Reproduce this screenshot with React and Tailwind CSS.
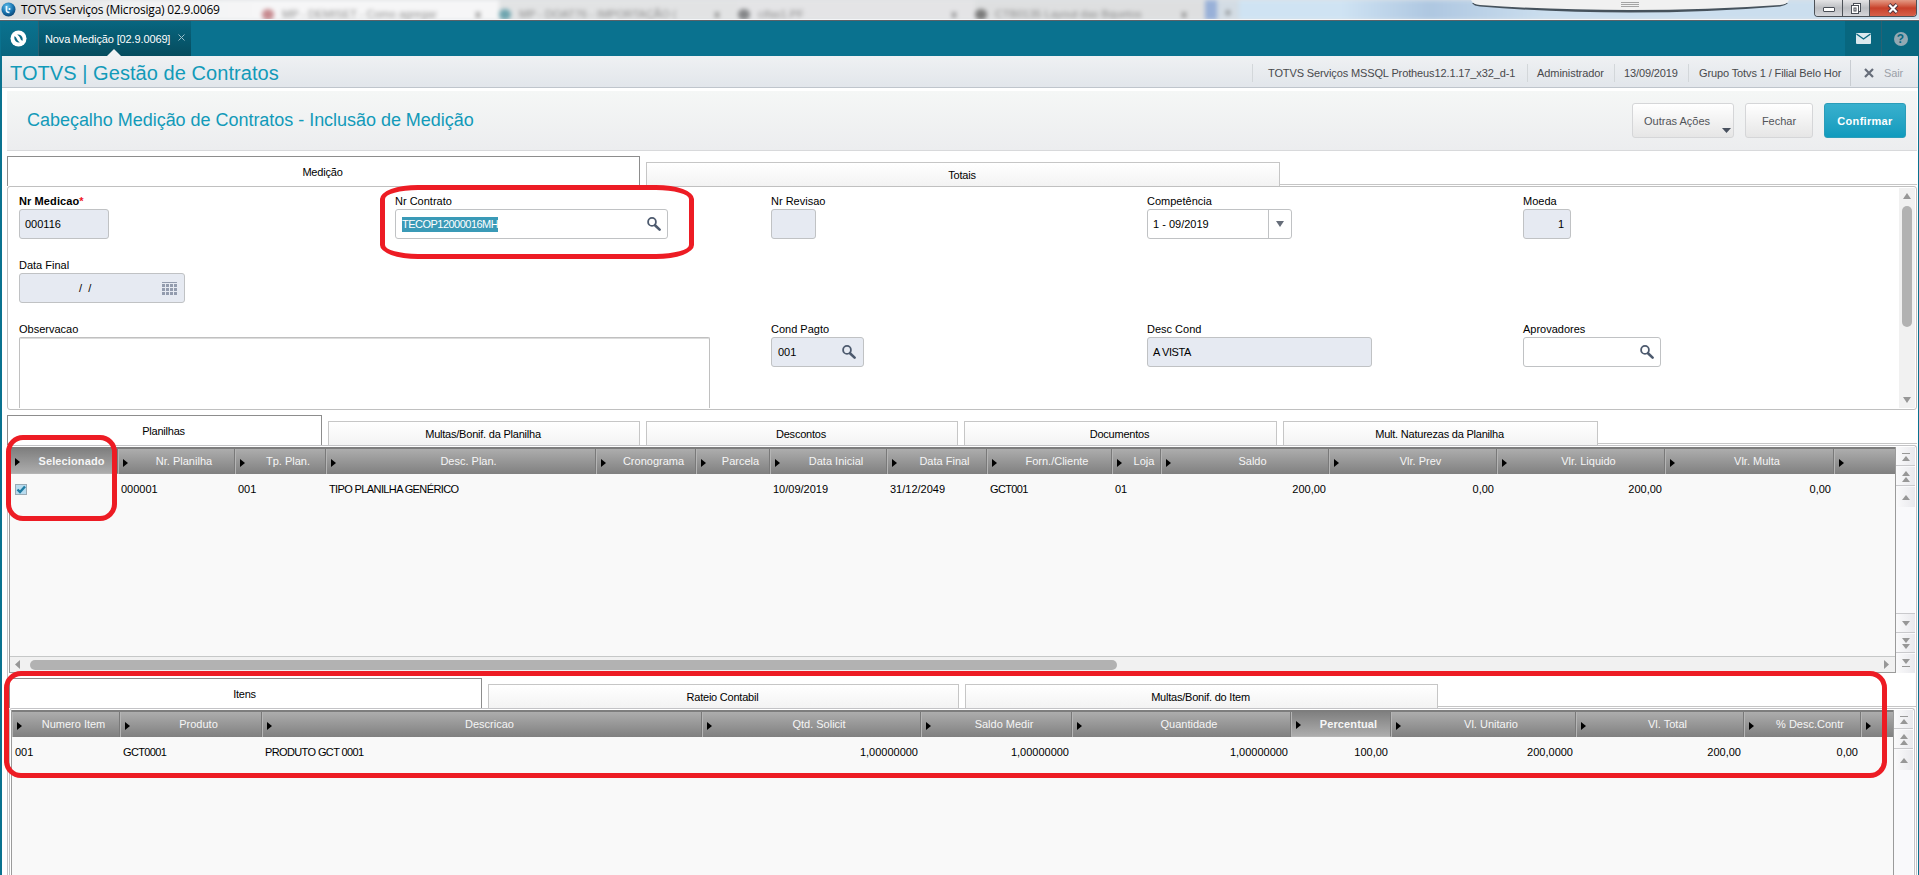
import React from 'react';
import clsx from 'clsx';

const sheetColumns = [
  { label: 'Selecionado', width: 'w-[108px]', active: true, check: true },
  { label: 'Nr. Planilha', width: 'w-[117px]', value: '000001' },
  { label: 'Tp. Plan.', width: 'w-[91px]', value: '001' },
  { label: 'Desc. Plan.', width: 'w-[270px]', value: 'TIPO PLANILHA GENÉRICO', caps: true },
  { label: 'Cronograma', width: 'w-[100px]' },
  { label: 'Parcela', width: 'w-[74px]' },
  { label: 'Data Inicial', width: 'w-[117px]', value: '10/09/2019' },
  { label: 'Data Final', width: 'w-[100px]', value: '31/12/2049' },
  { label: 'Forn./Cliente', width: 'w-[125px]', value: 'GCT001', caps: true },
  { label: 'Loja', width: 'w-[49px]', value: '01' },
  { label: 'Saldo', width: 'w-[168px]', value: '200,00', right: true },
  { label: 'Vlr. Prev', width: 'w-[168px]', value: '0,00', right: true },
  { label: 'Vlr. Liquido', width: 'w-[168px]', value: '200,00', right: true },
  { label: 'Vlr. Multa', width: 'w-[169px]', value: '0,00', right: true },
  { label: '', width: 'w-[61px]', last: true },
];

const itemColumns = [
  { label: 'Numero Item', width: 'w-[108px]', value: '001' },
  { label: 'Produto', width: 'w-[142px]', value: 'GCT0001', caps: true },
  { label: 'Descricao', width: 'w-[440px]', value: 'PRODUTO GCT 0001', caps: true },
  { label: 'Qtd. Solicit', width: 'w-[219px]', value: '1,00000000', right: true },
  { label: 'Saldo Medir', width: 'w-[151px]', value: '1,00000000', right: true },
  { label: 'Quantidade', width: 'w-[219px]', value: '1,00000000', right: true },
  { label: 'Percentual', width: 'w-[100px]', value: '100,00', right: true, active: true },
  { label: 'Vl. Unitario', width: 'w-[185px]', value: '200,0000', right: true },
  { label: 'Vl. Total', width: 'w-[168px]', value: '200,00', right: true },
  { label: '% Desc.Contr', width: 'w-[117px]', value: '0,00', right: true },
  { label: '', width: 'w-[32px]', last: true },
];

function Triangle({ dir = 'up', className = 'h-[6px] w-[8px] fill-[#979797]' }) {
  const points = {
    up: '4,0 8,6 0,6',
    down: '0,0 8,0 4,6',
    left: '8,0 8,6 0,3',
    right: '0,0 8,3 0,6',
  }[dir];
  return (
    <svg viewBox="0 0 8 6" preserveAspectRatio="none" className={clsx('block shrink-0', className)}>
      <polygon points={points} />
    </svg>
  );
}

function SearchIcon() {
  return (
    <svg width="14" height="14" viewBox="0 0 14 14" fill="none" stroke="#4d5a6e" className="shrink-0">
      <ellipse cx="5" cy="4.9" rx="3.9" ry="4" strokeWidth="1.8" />
      <path d="M8 8.2l4.6 4.4" strokeWidth="2.6" strokeLinecap="round" />
    </svg>
  );
}

function CalendarIcon() {
  return (
    <svg width="16" height="13" viewBox="0 0 16 13" fill="#939cae">
      <rect x="0" y="0" width="15" height="1" />
      {[2, 6, 10].map((y) => [0, 4, 8, 12].map((x) => <rect key={`${x}-${y}`} x={x} y={y} width="3" height="3" />))}
    </svg>
  );
}

function GhostTab({ icon, text, width, bg }) {
  return (
    <div className={clsx('flex h-full shrink-0 items-end gap-2', width, bg)}>
      <span className={clsx('h-[11px] w-3 shrink-0 rounded-full', icon)} />
      <span className="flex-1 overflow-hidden whitespace-nowrap text-[11px] leading-[12px] text-[#8c8c8c]">{text}</span>
      <span className="mr-[18px] text-[11px] font-bold leading-[12px] text-[#777]">x</span>
    </div>
  );
}

function TitleBar() {
  return (
    <div className="relative h-[21px] shrink-0 overflow-hidden border-b border-[#5b6167] bg-[#dfe2e5]">
      <div className="absolute inset-0 flex bg-[#e2e2e3] blur-[2px]">
        <div className="w-[262px] shrink-0 bg-linear-to-r from-[#d9dadb] via-[#f1f2f3] to-[#f6f6f7]" />
        <GhostTab icon="bg-[#c78b90]" text="MP - DEMISET - Como agregar" width="w-[237px]" bg="bg-[#f6f6f7]" />
        <GhostTab icon="bg-[#6fa5af]" text="MP - DOAT76 - IMPORTAÇÃO (" width="w-[239px]" bg="bg-[#e2e3e4]" />
        <GhostTab icon="bg-[#858789]" text="cifas1.PF" width="w-[237px]" bg="bg-[#e4e4e6]" />
        <GhostTab icon="bg-[#7c7c7c]" text="CTB0135 Layout das Bquetos" width="w-[230px]" bg="bg-[#dedfe0]" />
        <div className="w-[12px] shrink-0 bg-[#98b0d8]" />
        <div className="flex w-[22px] shrink-0 items-end justify-center bg-[#d3dce4] text-xs font-bold leading-[14px] text-[#777]">+</div>
        <div className="flex-1 bg-linear-to-r from-[#cfe3f3] from-15% via-[#aec7e1] via-28% to-[#cbdeee] to-45%" />
      </div>
      <div className="absolute inset-x-0 bottom-0 h-px bg-[#f4f6f8]" />
      <div className="relative flex h-full items-start justify-between">
        <div className="flex items-center gap-[5px] pl-px pt-[2px]">
          <svg width="15" height="15" viewBox="0 0 15 15">
            <defs>
              <radialGradient id="orb" cx="0.4" cy="0.3" r="0.8">
                <stop offset="0" stopColor="#62c0ee" />
                <stop offset="0.55" stopColor="#1872ae" />
                <stop offset="1" stopColor="#0b3a63" />
              </radialGradient>
            </defs>
            <circle cx="7.5" cy="7.5" r="7" fill="url(#orb)" />
            <path d="M5.5 4v4.5q0 2 3 1.8M8.5 6v2" stroke="#e9f6ff" strokeWidth="1.7" fill="none" />
          </svg>
          <span className="whitespace-nowrap font-['Open_Sans',sans-serif] text-[12px] leading-[15px] tracking-[-0.22px] text-black">
            TOTVS Serviços (Microsiga) 02.9.0069
          </span>
        </div>
        <div className="flex items-start">
          <svg width="318" height="14" viewBox="0 0 318 14" className="mr-[25px]">
            <path d="M1 3Q3 6 9 6.5Q80 12.5 159 12.5Q238 12.5 309 6.5Q315 5 317 3Z" fill="#46525c" />
            <path d="M0 0Q2 4.5 9 5Q80 10 159 10Q238 10 309 5Q316 4.5 318 0Z" fill="#f1f1f1" />
            <path d="M150 2.5h18M150 4.5h18M150 6.5h18" stroke="#a4a4a4" strokeWidth="1" />
          </svg>
          <div className="flex h-[17px] w-[103px] overflow-hidden rounded-b-[4px] border border-t-0 border-[#4c5157]">
            <div className="flex w-[28px] items-end justify-center border-r border-[#4c5157] bg-linear-to-b from-[#e4e4e6] via-[#bcbec2] to-[#d5d6da] pb-1">
              <div className="h-[5px] w-[12px] rounded-[1px] border border-[#4a4f57] bg-white" />
            </div>
            <div className="flex w-[27px] items-center justify-center border-r border-[#4c5157] bg-linear-to-b from-[#e4e4e6] via-[#bcbec2] to-[#d5d6da]">
              <svg width="12" height="13" viewBox="0 0 12 13" fill="#fff" stroke="#4a4f57">
                <rect x="3.5" y="1.5" width="7" height="8" />
                <rect x="1.5" y="3.5" width="7" height="8" />
                <rect x="4" y="6" width="2" height="3" />
              </svg>
            </div>
            <div className="flex flex-1 items-center justify-center bg-linear-to-b from-[#e39a85] via-[#c8402a] to-[#d6604a]">
              <svg width="12" height="11" viewBox="0 0 12 11" fill="none">
                <path d="M2 1.5l8 8M10 1.5l-8 8" stroke="#50303a" strokeWidth="4" />
                <path d="M2.3 1.8l7.4 7.4M9.7 1.8l-7.4 7.4" stroke="#fff" strokeWidth="2.2" />
              </svg>
            </div>
          </div>
          <div className="w-[2px]" />
        </div>
      </div>
    </div>
  );
}

function NavBar() {
  return (
    <div className="flex h-[35px] shrink-0 bg-[#0a728f]">
      <div className="flex w-[38px] items-center justify-center border-r border-[#2a6173] bg-linear-to-b from-[#0a728f] to-[#09657f] pr-[2px]">
        <svg width="17" height="17" viewBox="0 0 17 17" className="-mt-px">
          <circle cx="8.5" cy="8.5" r="8" fill="#fff" />
          <path d="M4.6 5.9Q3.6 9.2 6 11.4Q7.8 12.8 9.8 12.4Q7.4 10.6 7 9.2Q6.4 7 4.6 5.9Z" fill="#0a6a86" />
          <path d="M12.4 11.1Q13.4 7.8 11 5.6Q9.2 4.2 7.2 4.6Q9.6 6.4 10 7.8Q10.6 10 12.4 11.1Z" fill="#0a6a86" />
        </svg>
      </div>
      <div className="relative flex w-[152px] items-center bg-linear-to-b from-[#086680] to-[#064c5e] pl-[6px] text-white">
        <span className="whitespace-nowrap tracking-[-0.13px]">Nova Medição [02.9.0069]</span>
        <svg width="7" height="7" viewBox="0 0 7 7" className="ml-[8px] -mt-[2px]" stroke="#9dc0cb" strokeWidth="1">
          <path d="M.5.5l6 6M6.5.5l-6 6" />
        </svg>
        <Triangle className="absolute bottom-0 left-[68px] h-[7px] w-[14px] fill-[#f0f2f4]" />
      </div>
      <div className="ml-auto flex">
        <div className="flex w-[37px] items-center justify-center border-r border-[#2a6173] bg-[#08677f]">
          <svg width="15" height="11" viewBox="0 0 15 11">
            <rect width="15" height="11" rx="1" fill="#dbe9ee" />
            <path d="M.5 1L7.5 6L14.5 1" stroke="#08677f" strokeWidth="1.4" fill="none" />
          </svg>
        </div>
        <div className="flex w-[37px] items-center justify-center bg-[#08677f]">
          <span className="flex h-[14px] w-[14px] items-center justify-center rounded-full bg-[#93a9b3] text-[12px] font-bold text-[#08677f]">
            ?
          </span>
        </div>
      </div>
    </div>
  );
}

function AppHeader() {
  return (
    <div className="flex h-[32px] shrink-0 items-center border-b border-[#bfc5cc] bg-linear-to-b from-[#eff1f3] to-[#e2e6eb] pl-2 text-[#48494c]">
      <h1 className="pb-[3px] pt-[6px] text-xl leading-6 tracking-[0.06px] text-[#129ab9]">TOTVS | Gestão de Contratos</h1>
      <div className="ml-auto flex h-full items-center whitespace-nowrap pt-[3px] tracking-[-0.12px]">
        <span className="flex h-[18px] w-[275px] items-center border-l border-[#d3d7da] pl-[15px]">
          TOTVS Serviços MSSQL Protheus12.1.17_x32_d-1
        </span>
        <span className="flex h-[18px] w-[87px] items-center border-l border-[#d3d7da] pl-[9px] tracking-[-0.07px]">Administrador</span>
        <span className="flex h-[18px] w-[74px] items-center border-l border-[#d3d7da] pl-[9px]">13/09/2019</span>
        <span className="flex h-[18px] w-[162px] items-center border-l border-[#d3d7da] pl-[10px]">Grupo Totvs 1 / Filial Belo Hor</span>
        <span className="flex h-[26px] w-[68px] items-center border-l border-[#c9cdd2] pl-[13px] text-[#9ba0a8]">
          <svg width="10" height="10" viewBox="0 0 10 10" className="mr-[10px]" stroke="#666d79" strokeWidth="2.2">
            <path d="M1 1l8 8M9 1l-8 8" />
          </svg>
          Sair
        </span>
      </div>
    </div>
  );
}

function ActionBar() {
  const grey = 'relative flex h-[35px] items-center rounded-[3px] border border-[#d5d6d8] bg-linear-to-b from-white to-[#e6e6e6] text-[#515459]';
  return (
    <div className="ml-[5px] mr-px mt-[3px] flex h-[60px] shrink-0 border-b border-[#d8d9db] bg-linear-to-b from-[#f5f7f6] to-[#ecedef] pl-5 pr-[11px]">
      <h2 className="pt-[17px] text-[18px] leading-[24px] tracking-[-0.03px] text-[#129ab9]">
        Cabeçalho Medição de Contratos - Inclusão de Medição
      </h2>
      <div className="ml-auto flex pt-[12px]">
        <button className={clsx(grey, 'mr-[11px] w-[102px] pl-[11px]')}>
          Outras Ações
          <Triangle dir="down" className="absolute bottom-[4px] right-[2px] h-[5px] w-[9px] fill-[#48505e]" />
        </button>
        <button className={clsx(grey, 'mr-[11px] w-[68px] justify-center')}>Fechar</button>
        <button className="h-[35px] w-[82px] rounded-[3px] border border-[#2b9db9] bg-linear-to-b from-[#38b0ce] to-[#0f9bbd] font-bold tracking-[0.3px] text-white">
          Confirmar
        </button>
      </div>
    </div>
  );
}

function TabStrip({ tabs }) {
  return (
    <div className="flex h-[30px] shrink-0 items-end">
      {tabs.map((tab, i) => (
        <div
          key={tab.label}
          className={clsx(
            'flex items-center justify-center border border-b-0 pr-[2px]',
            tab.width,
            i === 0 ? 'h-[30px] border-[#8d8d8d] bg-white' : 'ml-[6px] h-[24px] border-[#c6c6c6] bg-linear-to-b from-white to-[#f3f3f3]'
          )}
        >
          {tab.label}
        </div>
      ))}
      <div className="h-[2px] flex-1 border-t border-[#c6c6c6]" />
    </div>
  );
}

function Field({ label, bold, width, value, readOnly = true, className, children }) {
  return (
    <div>
      <div className={clsx('h-[14px] leading-[13px]', bold && 'font-bold tracking-[0.1px]')}>
        {label}
        {bold && <span className="text-[#f0141e]">*</span>}
      </div>
      <div
        className={clsx(
          'flex h-[30px] items-center rounded-[3px] border border-[#c0c2c4] px-[6px]',
          width,
          readOnly ? 'bg-[#e6eaf2]' : 'bg-white',
          className
        )}
      >
        {value}
        {children}
      </div>
    </div>
  );
}

function FormPanel() {
  return (
    <div className="mx-[5px] mr-px flex h-[224px] shrink-0 overflow-hidden rounded-[3px] border border-[#c0c0c0]">
      <div className="grid flex-1 grid-cols-[376px_376px_376px_376px_1fr] grid-rows-[64px_64px_1fr] overflow-hidden pl-[11px] pt-[8px]">
        <Field label="Nr Medicao" bold width="w-[90px]" value="000116" className="pl-[5px]" />
        <Field label="Nr Contrato" width="w-[273px]" readOnly={false}>
          <span className="bg-[#3a9ab7] leading-[15px] tracking-[-0.52px] text-white">TECOP12000016MH</span>
          <span className="ml-auto">
            <SearchIcon />
          </span>
        </Field>
        <Field label="Nr Revisao" width="w-[45px]" />
        <Field label="Competência" width="w-[145px]" value="1 - 09/2019" readOnly={false} className="pl-[5px] pr-0">
          <span className="my-px ml-auto flex h-full w-[23px] items-center justify-center border-l border-[#c0c2c4]">
            <Triangle dir="down" className="h-[6px] w-[8px] fill-[#666d79]" />
          </span>
        </Field>
        <Field label="Moeda" width="w-[48px]" value="1" className="justify-end" />

        <div className="col-span-5">
          <Field label="Data Final" width="w-[166px]" className="justify-between pr-[6px]">
            <span className="whitespace-pre pl-[53px]">/  /</span>
            <CalendarIcon />
          </Field>
        </div>

        <div className="col-span-2">
          <div className="h-[14px] leading-[13px]">Observacao</div>
          <div className="h-[71px] w-[691px] rounded-t-[2px] border border-b-0 border-[#c0c0c0] bg-white shadow-[inset_0_1px_0_#dcdcdc]" />
        </div>
        <Field label="Cond Pagto" width="w-[93px]" value="001">
          <span className="ml-auto pr-px">
            <SearchIcon />
          </span>
        </Field>
        <Field label="Desc Cond" width="w-[225px]" className="pl-[5px]">
          <span className="tracking-[-0.4px]">A VISTA</span>
        </Field>
        <Field label="Aprovadores" width="w-[138px]" readOnly={false}>
          <span className="ml-auto">
            <SearchIcon />
          </span>
        </Field>
      </div>
      <div className="mr-px mt-px flex h-[220px] w-[16px] flex-col items-center bg-[#f1f1f1] py-[5px]">
        <Triangle />
        <div className="mb-auto mt-[7px] h-[121px] w-[10px] rounded-full bg-[#b2b2b2]" />
        <Triangle dir="down" />
      </div>
    </div>
  );
}

function Checkbox() {
  return (
    <svg width="12" height="11" viewBox="0 0 12 11" className="ml-[2px]">
      <rect x=".5" y=".5" width="11" height="10" fill="#b9dcef" stroke="#9aabb6" />
      <path d="M2.5 5.5L5 8L10 2.5" stroke="#1f7ca3" strokeWidth="2.4" fill="none" />
    </svg>
  );
}

function GridTable({ columns }) {
  return (
    <div>
      <div className="flex h-[27px] border-t-2 border-[#7d7d7d] text-[#f5f5f5]">
        {columns.map((col, i) => (
          <div
            key={i}
            className={clsx(
              'flex shrink-0 items-center border-l border-l-[#b5b5b5] pl-[4px]',
              col.width,
              !col.last && 'border-r border-r-[#797979]',
              col.active
                ? 'border-b border-b-[#b5b5b5] bg-linear-to-b from-[#808080] to-[#adadad] font-bold tracking-[0.12px]'
                : 'bg-linear-to-b from-[#adadad] to-[#808080]'
            )}
          >
            <Triangle dir="right" className="mt-[2px] h-[8px] w-[5px] fill-black" />
            <span className="flex-1 whitespace-nowrap pb-px pl-[6px] text-center">{col.label}</span>
          </div>
        ))}
      </div>
      <div className="flex h-[30px] items-center">
        {columns.map((col, i) => (
          <div
            key={i}
            className={clsx(
              'shrink-0 whitespace-nowrap px-[3px]',
              col.width,
              col.right && 'text-right',
              col.caps && 'tracking-[-0.62px]'
            )}
          >
            {col.check ? <Checkbox /> : col.value}
          </div>
        ))}
      </div>
    </div>
  );
}

function NavButton({ children }) {
  return (
    <div className="mb-px flex h-[19px] w-full flex-col items-center justify-center border-b border-[#c9c9cc] bg-linear-to-r from-[#fafafb] to-[#e9e9ed]">
      {children}
    </div>
  );
}

const bar = <div className="my-[2px] h-px w-[8px] bg-[#979797]" />;

function NavRail({ full }) {
  return (
    <div className="flex w-[19px] flex-col bg-[#f9f9fb]">
      <NavButton>
        {bar}
        <Triangle className="h-[5px] w-[8px] fill-[#979797]" />
      </NavButton>
      <NavButton>
        <Triangle className="h-[5px] w-[8px] fill-[#979797]" />
        <Triangle className="mt-px h-[5px] w-[8px] fill-[#979797]" />
      </NavButton>
      <div className="flex h-[20px] items-center justify-center bg-linear-to-r from-[#fafafb] to-[#e9e9ed]">
        <Triangle className="h-[5px] w-[8px] fill-[#979797]" />
      </div>
      {full && (
        <div className="mt-auto border-t border-[#c9c9cc]">
          <NavButton>
            <Triangle dir="down" className="h-[5px] w-[8px] fill-[#979797]" />
          </NavButton>
          <NavButton>
            <Triangle dir="down" className="h-[5px] w-[8px] fill-[#979797]" />
            <Triangle dir="down" className="mt-px h-[5px] w-[8px] fill-[#979797]" />
          </NavButton>
          <div className="flex h-[19px] flex-col items-center justify-center bg-linear-to-r from-[#fafafb] to-[#e9e9ed]">
            <Triangle dir="down" className="h-[5px] w-[8px] fill-[#979797]" />
            {bar}
          </div>
        </div>
      )}
    </div>
  );
}

// Pen marks drawn over the areas the user has to look at
function Highlights() {
  return (
    <>
      <div className="pointer-events-none absolute left-[380px] top-[185px] h-[74px] w-[314px] rounded-[38px/14px] border-[5px] border-[#ed1c24]" />
      <div className="pointer-events-none absolute left-[6px] top-[435px] h-[86px] w-[111px] rounded-[17px] border-[5px] border-[#ed1c24]" />
      <div className="pointer-events-none absolute left-[4px] top-[671px] h-[107px] w-[1883px] rounded-[17px] border-[5px] border-[#ed1c24]" />
    </>
  );
}

export default function App() {
  return (
    <div className="relative flex h-[875px] w-[1919px] flex-col overflow-hidden bg-white font-['Liberation_Sans',Arial,sans-serif] text-[11px] leading-[14px] text-black">
      <TitleBar />
      <div className="flex min-h-0 flex-1 flex-col border-l-2 border-r border-[#0a728f]">
        <div className="-mx-px flex flex-col">
          <NavBar />
        </div>
        <AppHeader />
        <ActionBar />

        <div className="ml-[5px] mr-px mt-[5px] shrink-0 tracking-[-0.2px]">
          <TabStrip
            tabs={[
              { label: 'Medição', width: 'w-[633px]' },
              { label: 'Totais', width: 'w-[634px]' },
            ]}
          />
        </div>
        <FormPanel />

        <div className="ml-[5px] mr-px mt-[5px] flex min-h-0 flex-1 flex-col">
          <div className="tracking-[-0.22px]">
            <TabStrip
              tabs={[
                { label: 'Planilhas', width: 'w-[315px]' },
                { label: 'Multas/Bonif. da Planilha', width: 'w-[312px]' },
                { label: 'Descontos', width: 'w-[312px]' },
                { label: 'Documentos', width: 'w-[313px]' },
                { label: 'Mult. Naturezas da Planilha', width: 'w-[315px]' },
              ]}
            />
          </div>
          <div className="flex min-h-0 flex-1 flex-col rounded-t-[3px] border border-b-0 border-[#c3c3c6] pl-px pt-px">
            <div className="flex h-[226px] shrink-0">
              <div className="flex w-[1887px] flex-col border border-t-0 border-[#9b9b9b] bg-[#f9f9f9]">
                <GridTable columns={sheetColumns} />
                <div className="mt-auto flex h-[16px] items-center border-t border-[#c6c8c8] bg-[#f1f1f1] pl-[5px] pr-[6px]">
                  <Triangle dir="left" className="h-[9px] w-[5px] fill-[#979797]" />
                  <div className="ml-[10px] mr-auto h-[10px] w-[1087px] rounded-full bg-[#b2b2b2]" />
                  <Triangle dir="right" className="h-[9px] w-[5px] fill-[#979797]" />
                </div>
              </div>
              <NavRail full />
            </div>

            <div className="mt-[5px] tracking-[-0.22px]">
              <TabStrip
                tabs={[
                  { label: 'Itens', width: 'w-[473px]' },
                  { label: 'Rateio Contabil', width: 'w-[471px]' },
                  { label: 'Multas/Bonif. do Item', width: 'w-[473px]' },
                ]}
              />
            </div>
            <div className="mr-px flex min-h-0 flex-1 rounded-t-[3px] border border-b-0 border-[#c3c3c6] pl-px pt-px">
              <div className="w-[1883px] border-x border-[#9b9b9b] bg-[#f9f9f9]">
                <GridTable columns={itemColumns} />
              </div>
              <NavRail />
            </div>
          </div>
        </div>
      </div>
      <Highlights />
    </div>
  );
}
